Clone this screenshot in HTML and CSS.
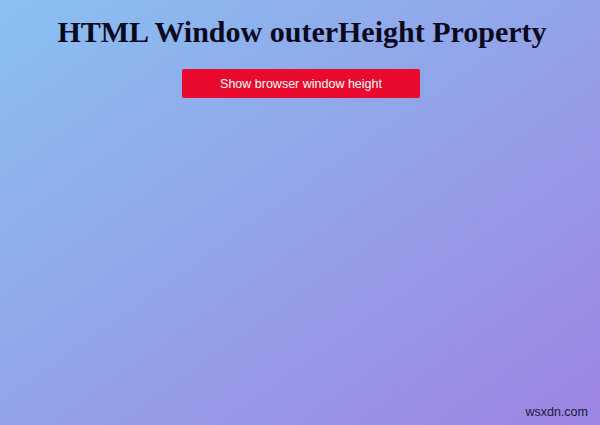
FILE: index.html
```html
<!DOCTYPE html>
<html>
<head>
<meta charset="utf-8">
<link rel="stylesheet" href="styles.css">
</head>
<body>
<div class="page">
  <h1 class="title">HTML Window outerHeight Property</h1>
  <button class="btn">Show browser window height</button>
  <div class="spacer"></div>
  <div class="mark">wsxdn.com</div>
</div>
</body>
</html>
```
FILE: styles.css
```css
html, body {
  margin: 0;
  padding: 0;
  width: 600px;
  height: 425px;
  overflow: hidden;
}
.page {
  width: 600px;
  height: 425px;
  box-sizing: border-box;
  background: linear-gradient(to bottom right, #89c0f0, #9d84e2);
  display: flex;
  flex-direction: column;
  align-items: center;
  padding-top: 14px;
}
.title {
  margin: 0 0 0 4px;
  font-family: "Liberation Serif", serif;
  font-weight: bold;
  font-size: 30px;
  line-height: 35px;
  color: #0a0a1e;
}
.btn {
  margin-top: 20px;
  margin-left: 2px;
  width: 238px;
  height: 29px;
  border: none;
  border-radius: 2px;
  background: #ea0a2e;
  color: #fff;
  font-family: "Liberation Sans", sans-serif;
  font-size: 12.5px;
  padding: 0;
}
.spacer { flex: 1; }
.mark {
  align-self: flex-end;
  margin: 0 12px 6px 0;
  font-family: "Liberation Sans", sans-serif;
  font-size: 12.5px;
  color: #1a1a3a;
}
```
